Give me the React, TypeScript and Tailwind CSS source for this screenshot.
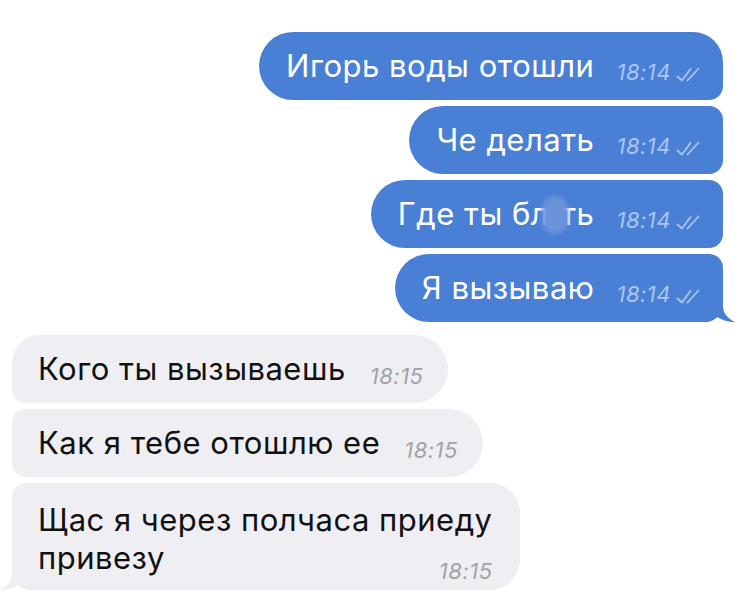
import React from 'react';

const font = { fontFamily: 'Inter, "Liberation Sans", Arial, sans-serif' };

function Checks() {
  return (
    <svg width="25" height="15" viewBox="0 0 25 15" fill="none" className="ml-[5px] mb-[1px]">
      <path d="M1.5 9.5 L6 13.5 L14.5 2" stroke="#a9c5f1" strokeWidth="1.8" strokeLinecap="round" strokeLinejoin="round" />
      <path d="M11.5 13.5 L22.5 1.5" stroke="#a9c5f1" strokeWidth="1.8" strokeLinecap="round" />
    </svg>
  );
}

function OutTime() {
  return (
    <div className="ml-[22px] mb-[3px] flex items-end">
      <span className="text-[22px] leading-none italic tracking-[0.5px] text-[#a9c5f1]">18:14</span>
      <Checks />
    </div>
  );
}

function InTime() {
  return <span className="ml-[24px] mb-[2px] text-[22px] leading-none italic tracking-[0.5px] text-[#a2a2a7]">18:15</span>;
}

function Blob() {
  return (
    <span className="relative inline-block w-[12px] h-[30px] align-middle">
      <span className="absolute -left-[7px] -top-[6px] w-[26px] h-[38px] rounded-full bg-[#6a93da] blur-[2px]" />
    </span>
  );
}

export default function App() {
  return (
    <div className="w-[738px] h-[600px] bg-white overflow-hidden pt-[32px] flex flex-col tracking-[0.5px]" style={font}>
      {/* исходящие */}
      <div className="flex flex-col items-end gap-[6px] pr-[15px]">
        <div className="flex items-end bg-[#4a7fd6] text-white text-[31px] leading-[40px] pl-[27px] pr-[22px] py-[14px] rounded-l-[34px] rounded-tr-[30px] rounded-br-[14px]">
          <span>Игорь воды отошли</span>
          <OutTime />
        </div>
        <div className="flex items-end bg-[#4a7fd6] text-white text-[31px] leading-[40px] pl-[27px] pr-[22px] py-[14px] rounded-l-[34px] rounded-r-[14px]">
          <span>Че делать</span>
          <OutTime />
        </div>
        <div className="flex items-end bg-[#4a7fd6] text-white text-[31px] leading-[40px] pl-[27px] pr-[22px] py-[14px] rounded-l-[34px] rounded-r-[14px]">
          <span>Где ты бл<Blob />ть</span>
          <OutTime />
        </div>
        <div className="relative flex items-end bg-[#4a7fd6] text-white text-[31px] leading-[40px] pl-[27px] pr-[22px] py-[14px] rounded-l-[34px] rounded-tr-[14px] rounded-br-[18px]">
          <span>Я вызываю</span>
          <OutTime />
          <svg width="30" height="26" viewBox="0 0 30 26" className="absolute -right-[12px] bottom-0">
            <path d="M0 0 H18 V10 C18 17 22 22 30 26 C23 26 17 24 12 21 C8 24 4 26 0 26 Z" fill="#4a7fd6" />
          </svg>
        </div>
      </div>

      {/* входящие */}
      <div className="flex flex-col items-start gap-[6px] pl-[12px] mt-[13px]">
        <div className="flex items-end bg-[#efeff3] text-[#111] text-[31px] leading-[40px] pl-[26px] pr-[25px] py-[14px] rounded-r-[34px] rounded-tl-[28px] rounded-bl-[14px]">
          <span>Кого ты вызываешь</span>
          <InTime />
        </div>
        <div className="flex items-end bg-[#efeff3] text-[#111] text-[31px] leading-[40px] pl-[26px] pr-[25px] py-[14px] rounded-r-[34px] rounded-l-[14px]">
          <span>Как я тебе отошлю ее</span>
          <InTime />
        </div>
        <div className="relative flex flex-col bg-[#efeff3] text-[#111] text-[31px] leading-[38px] pl-[26px] pr-[27px] pt-[18px] pb-[8px] rounded-r-[30px] rounded-tl-[14px] rounded-bl-[18px]">
          <span>
            Щас я через полчаса приеду
            <br />
            привезу
          </span>
          <span className="self-end -mt-[17px] text-[22px] leading-none italic tracking-[0.5px] text-[#a2a2a7]">18:15</span>
          <svg width="30" height="26" viewBox="0 0 30 26" className="absolute -left-[12px] bottom-0">
            <path d="M30 0 H12 V10 C12 17 8 22 0 26 C7 26 13 24 18 21 C22 24 26 26 30 26 Z" fill="#efeff3" />
          </svg>
        </div>
      </div>
    </div>
  );
}
